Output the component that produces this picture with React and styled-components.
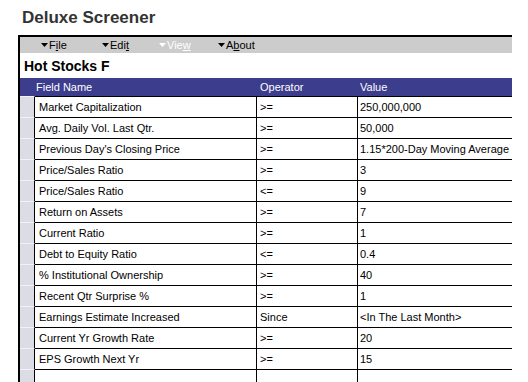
import React from 'react';
import styled, { createGlobalStyle } from 'styled-components';

const Global = createGlobalStyle`
  html, body { margin: 0; padding: 0; background: #fff; }
  body { font-family: "Liberation Sans", Arial, sans-serif; overflow: hidden; }
`;

const Page = styled.div`
  width: 528px;
  height: 382px;
  overflow: hidden;
`;

const Title = styled.h1`
  margin: 0;
  box-sizing: border-box;
  height: 35px;
  padding: 8px 0 0 22px;
  font: bold 17px/20px "Liberation Sans", Arial, sans-serif;
  color: #333;
`;

const Frame = styled.div`
  margin-left: 18px;
  width: 494px;
  box-sizing: border-box;
  border-left: 2px solid #000;
  border-top: 2px solid #000;
  min-height: 400px;
`;

const MenuBar = styled.div`
  display: flex;
  align-items: center;
  height: 16px;
  padding-left: 21px;
  background: #cccccc;
  font-size: 11px;
`;

const MenuItem = styled.div`
  display: flex;
  align-items: center;
  gap: 1px;
  width: ${p => p.$w}px;
  color: ${p => (p.$disabled ? '#fff' : '#000')};
`;

const U = styled.span`
  text-decoration: underline;
`;

const Caret = ({ color }) => (
  <svg width="7" height="4" viewBox="0 0 7 4" style={{ display: 'block' }}>
    <path d="M0 0h7L3.5 4z" fill={color} />
  </svg>
);

const SheetName = styled.div`
  height: 25px;
  display: flex;
  align-items: center;
  padding-left: 4px;
  font: bold 14px "Liberation Sans", Arial, sans-serif;
  color: #000;
`;

const cols = '15px 222px 101px 1fr';

const Header = styled.div`
  display: grid;
  grid-template-columns: ${cols};
  height: 18px;
  align-items: center;
  background: #3d3d8d;
  color: #fff;
  font-size: 11px;
`;

const HeadCell = styled.div`
  padding-left: ${p => p.$pad}px;
`;

const Row = styled.div`
  display: grid;
  grid-template-columns: ${cols};
  height: 21px;
  font-size: 11px;
  color: #000;
`;

const Marker = styled.div`
  background: #dcdce4;
  border-top: 1px solid #f2f2f6;
  border-right: 1px solid #000;
`;

const Cell = styled.div`
  display: flex;
  align-items: center;
  border-top: 1px solid #000;
  border-right: ${p => (p.$last ? 'none' : '1px solid #000')};
  padding-left: ${p => p.$pad}px;
  white-space: nowrap;
  overflow: hidden;
`;

const rows = [
  ['Market Capitalization', '>=', '250,000,000'],
  ['Avg. Daily Vol. Last Qtr.', '>=', '50,000'],
  ["Previous Day's Closing Price", '>=', '1.15*200-Day Moving Average'],
  ['Price/Sales Ratio', '>=', '3'],
  ['Price/Sales Ratio', '<=', '9'],
  ['Return on Assets', '>=', '7'],
  ['Current Ratio', '>=', '1'],
  ['Debt to Equity Ratio', '<=', '0.4'],
  ['% Institutional Ownership', '>=', '40'],
  ['Recent Qtr Surprise %', '>=', '1'],
  ['Earnings Estimate Increased', 'Since', '<In The Last Month>'],
  ['Current Yr Growth Rate', '>=', '20'],
  ['EPS Growth Next Yr', '>=', '15'],
  ['', '', ''],
];

export default function App() {
  return (
    <Page>
      <Global />
      <Title>Deluxe Screener</Title>
      <Frame>
        <MenuBar>
          <MenuItem $w={61}>
            <Caret color="#000" />
            <span>F<U>i</U>le</span>
          </MenuItem>
          <MenuItem $w={57}>
            <Caret color="#000" />
            <span>Edi<U>t</U></span>
          </MenuItem>
          <MenuItem $w={59} $disabled>
            <Caret color="#fff" />
            <span>Vie<U>w</U></span>
          </MenuItem>
          <MenuItem $w={60}>
            <Caret color="#000" />
            <span>A<U>b</U>out</span>
          </MenuItem>
        </MenuBar>
        <SheetName>Hot Stocks F</SheetName>
        <Header>
          <span />
          <HeadCell $pad={1}>Field Name</HeadCell>
          <HeadCell $pad={3}>Operator</HeadCell>
          <HeadCell $pad={2}>Value</HeadCell>
        </Header>
        {rows.map((r, i) => (
          <Row key={i}>
            <Marker />
            <Cell $pad={4}>{r[0]}</Cell>
            <Cell $pad={3}>{r[1]}</Cell>
            <Cell $pad={2} $last>{r[2]}</Cell>
          </Row>
        ))}
      </Frame>
    </Page>
  );
}
